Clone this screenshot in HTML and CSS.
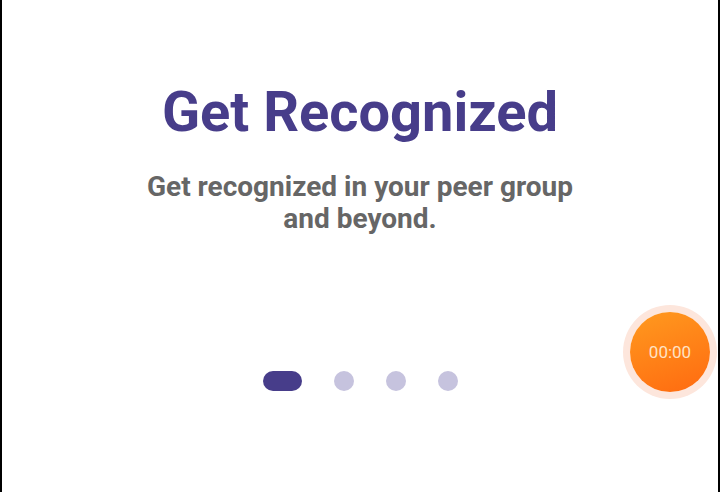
FILE: index.html
```html
<!DOCTYPE html>
<html>
<head>
<meta charset="utf-8">
<link rel="stylesheet" href="styles.css">
</head>
<body>
<div class="screen">
  <div class="content">
    <h1 class="title">Get Recognized</h1>
    <p class="subtitle">Get recognized in your peer group<br>and beyond.</p>
    <div class="dots">
      <span class="dot active"></span>
      <span class="dot"></span>
      <span class="dot"></span>
      <span class="dot"></span>
    </div>
  </div>
  <div class="timer"><span>00:00</span></div>
</div>
</body>
</html>
```
FILE: styles.css
```css
html, body {
  margin: 0;
  padding: 0;
  background: #000;
}
.screen {
  position: relative;
  width: 716px;
  height: 492px;
  margin: 0 2px;
  background: #fff;
  font-family: Roboto, "Noto Sans", sans-serif;
  overflow: hidden;
}
.content {
  display: flex;
  flex-direction: column;
  align-items: center;
  padding-top: 78px;
}
.title {
  margin: 0;
  font-size: 56px;
  line-height: 68px;
  font-weight: 700;
  color: #473d8a;
}
.subtitle {
  margin: 25px 0 0;
  font-size: 28px;
  line-height: 32px;
  font-weight: 700;
  color: #666;
  text-align: center;
}
.dots {
  display: flex;
  align-items: center;
  gap: 32px;
  margin-top: 136px;
}
.dot {
  width: 20px;
  height: 20px;
  border-radius: 50%;
  background: #c6c3de;
}
.dot.active {
  width: 39px;
  border-radius: 10px;
  background: #473d8a;
}
.timer {
  position: absolute;
  left: 628px;
  top: 312px;
  width: 80px;
  height: 80px;
  border-radius: 50%;
  background: linear-gradient(160deg, #ff9a1f, #ff6a10);
  box-shadow: 0 0 0 7px #fde6dc;
  display: flex;
  align-items: center;
  justify-content: center;
  color: #ffe3c4;
  font-size: 17px;
}
```
